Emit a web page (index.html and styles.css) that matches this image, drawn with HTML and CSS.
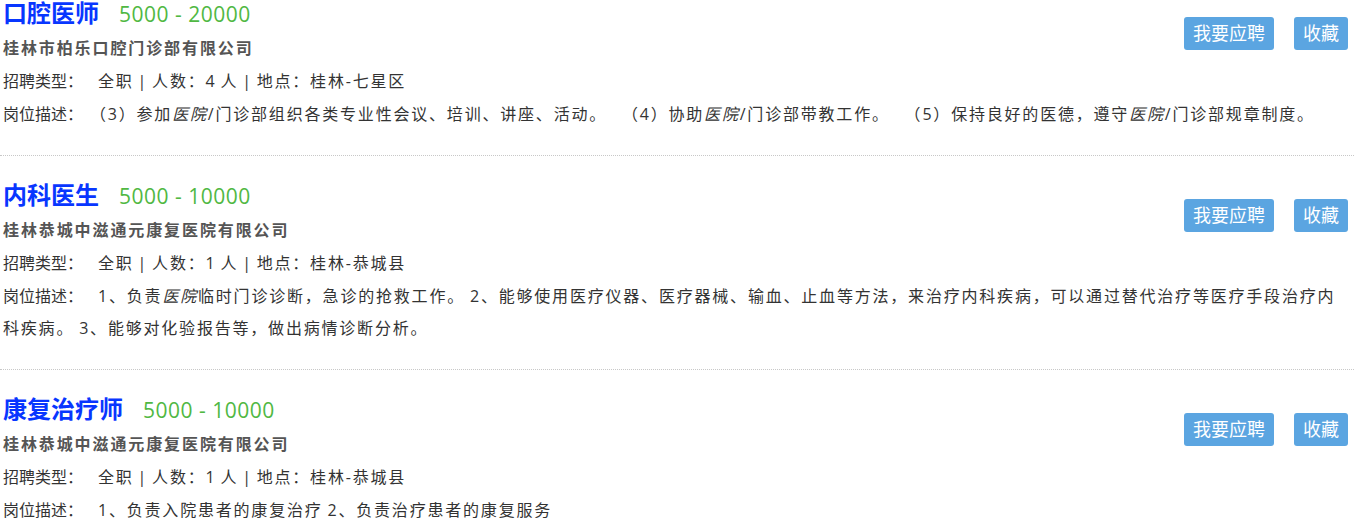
FILE: index.html
```html
<!DOCTYPE html>
<html lang="zh-CN">
<head>
<meta charset="utf-8">
<title>招聘列表</title>
<link rel="stylesheet" href="styles.css">
</head>
<body>
<div class="list">
  <div class="job">
    <div class="actions">
      <a class="btn">我要应聘</a>
      <a class="btn">收藏</a>
    </div>
    <div class="head"><span class="title">口腔医师</span><span class="salary">5000 - 20000</span></div>
    <div class="company">桂林市柏乐口腔门诊部有限公司</div>
    <div class="info"><span class="lbl">招聘类型：</span>全职 | 人数：4 人 | 地点：桂林-七星区</div>
    <div class="desc"><span class="lbl">岗位描述：</span>（3）参加<em>医院</em>/门诊部组织各类专业性会议、培训、讲座、活动。&nbsp;&nbsp; （4）协助<em>医院</em>/门诊部带教工作。&nbsp;&nbsp; （5）保持良好的医德，遵守<em>医院</em>/门诊部规章制度。</div>
  </div>
  <div class="job">
    <div class="actions">
      <a class="btn">我要应聘</a>
      <a class="btn">收藏</a>
    </div>
    <div class="head"><span class="title">内科医生</span><span class="salary">5000 - 10000</span></div>
    <div class="company">桂林恭城中滋通元康复医院有限公司</div>
    <div class="info"><span class="lbl">招聘类型：</span>全职 | 人数：1 人 | 地点：桂林-恭城县</div>
    <div class="desc"><span class="lbl">岗位描述：</span>1、负责<em>医院</em>临时门诊诊断，急诊的抢救工作。 2、能够使用医疗仪器、医疗器械、输血、止血等方法，来治疗内科疾病，可以通过替代治疗等医疗手段治疗内科疾病。 3、能够对化验报告等，做出病情诊断分析。</div>
  </div>
  <div class="job">
    <div class="actions">
      <a class="btn">我要应聘</a>
      <a class="btn">收藏</a>
    </div>
    <div class="head"><span class="title">康复治疗师</span><span class="salary">5000 - 10000</span></div>
    <div class="company">桂林恭城中滋通元康复医院有限公司</div>
    <div class="info"><span class="lbl">招聘类型：</span>全职 | 人数：1 人 | 地点：桂林-恭城县</div>
    <div class="desc"><span class="lbl">岗位描述：</span>1、负责入院患者的康复治疗 2、负责治疗患者的康复服务</div>
  </div>
</div>
</body>
</html>
```
FILE: styles.css
```css
html, body {
  margin: 0;
  padding: 0;
  background: #fff;
}
body {
  font-family: "Open Sans", "Noto Sans CJK SC", sans-serif;
  color: #333;
  font-size: 16px;
}
.list {
  margin-top: -26px;
}
.job {
  padding: 21px 6px 25px 3px;
  border-bottom: 1px dotted #c8c8c8;
}
.job:last-child {
  border-bottom: none;
}
.actions {
  float: right;
  display: flex;
  gap: 20px;
  margin-top: 22px;
  letter-spacing: 0;
}
.btn {
  display: block;
  height: 33px;
  line-height: 33px;
  padding: 0 9px;
  background: #5ba5e1;
  color: #fff;
  font-size: 18px;
  border-radius: 3px;
}
.head {
  height: 37px;
  line-height: 36px;
  display: flex;
  align-items: baseline;
}
.title {
  font-size: 24px;
  font-weight: bold;
  color: #0836ff;
}
.salary {
  margin-left: 20px;
  font-size: 21px;
  letter-spacing: 0.5px;
  color: #50b843;
}
.company {
  line-height: 33px;
  font-weight: bold;
  color: #555;
  letter-spacing: 1.9px;
}
.info {
  line-height: 33px;
  letter-spacing: 1.8px;
  word-spacing: -2px;
}
.desc {
  line-height: 32px;
  letter-spacing: 1.8px;
  word-spacing: -1px;
}
.lbl {
  letter-spacing: 0;
  word-spacing: 0;
  margin-right: 15px;
}
em {
  font-style: italic;
}
```
